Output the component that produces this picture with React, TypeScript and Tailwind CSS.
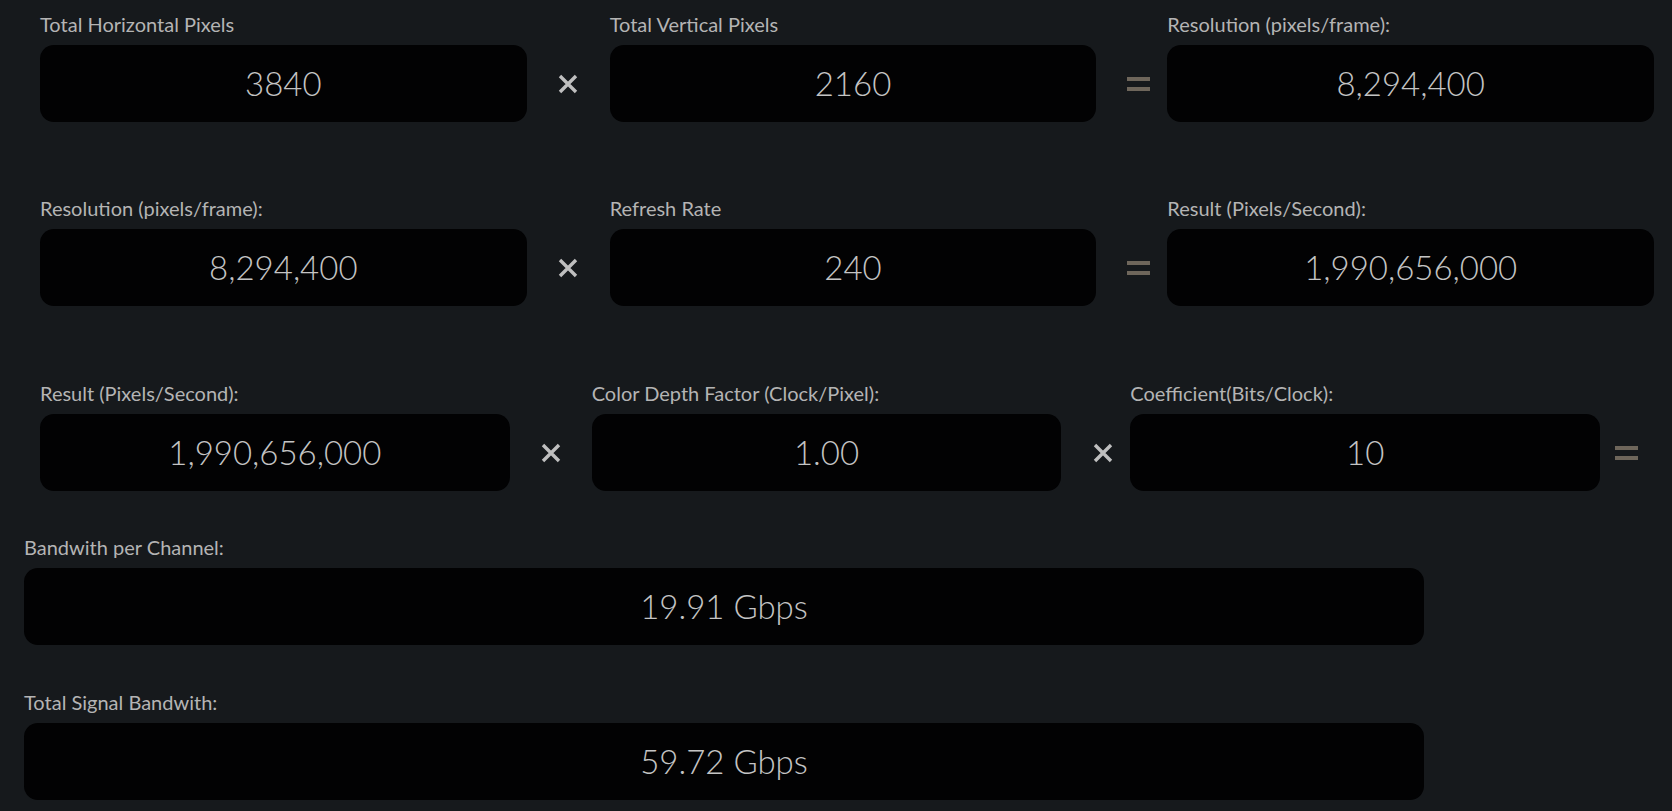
import React from "react";

// Calculator rows: field widths follow the reference screen
type FieldProps = {
  label: string;
  value: string;
  className?: string;
};

function Field({ label, value, className = "" }: FieldProps) {
  return (
    <div className={`flex flex-col ${className}`}>
      <div className="h-[24px] leading-[24px] mb-[9px] text-[20px] text-[#b4b4b4] whitespace-nowrap">
        {label}
      </div>
      <div className="h-[77px] rounded-[14px] bg-[#020203] flex items-center justify-center text-[33px] font-light text-[#c4c4c4]">
        {value}
      </div>
    </div>
  );
}

function Times({ className = "" }: { className?: string }) {
  return (
    <div className={`self-end h-[77px] flex items-center shrink-0 ${className}`}>
      <svg width="20" height="20" viewBox="0 0 20 20">
        <path d="M2 2 L18 18 M18 2 L2 18" stroke="#bfbfbf" strokeWidth="3.4" />
      </svg>
    </div>
  );
}

function Equals({ className = "" }: { className?: string }) {
  return (
    <div className={`self-end h-[77px] flex items-center shrink-0 ${className}`}>
      <div className="flex flex-col gap-[6px] mt-[1px]">
        <div className="h-[4px] w-[23px] bg-[#6e665b]" />
        <div className="h-[4px] w-[23px] bg-[#6e665b]" />
      </div>
    </div>
  );
}

export default function App() {
  return (
    <div
      className="min-h-[811px] w-full bg-[#16191c] pt-[12px]"
      style={{ fontFamily: 'Lato, "Noto Sans", sans-serif' }}
    >
      <div className="pl-[40px] pr-[18px]">
        {/* Row 1 */}
        <div className="flex mb-[74px]">
          <Field className="flex-1" label="Total Horizontal Pixels" value="3840" />
          <Times className="w-[83px] pl-[31px]" />
          <Field className="flex-1" label="Total Vertical Pixels" value="2160" />
          <Equals className="w-[71px] pl-[31px]" />
          <Field className="flex-1" label="Resolution (pixels/frame):" value="8,294,400" />
        </div>

        {/* Row 2 */}
        <div className="flex mb-[75px]">
          <Field className="flex-1" label="Resolution (pixels/frame):" value="8,294,400" />
          <Times className="w-[83px] pl-[31px]" />
          <Field className="flex-1" label="Refresh Rate" value="240" />
          <Equals className="w-[71px] pl-[31px]" />
          <Field className="flex-1" label="Result (Pixels/Second):" value="1,990,656,000" />
        </div>

        {/* Row 3 */}
        <div className="flex mb-[44px]">
          <Field className="flex-1" label="Result (Pixels/Second):" value="1,990,656,000" />
          <Times className="w-[82px] pl-[31px]" />
          <Field className="flex-1" label="Color Depth Factor (Clock/Pixel):" value="1.00" />
          <Times className="w-[69px] pl-[32px]" />
          <Field className="flex-1" label="Coefficient(Bits/Clock):" value="10" />
          <Equals className="w-[54px] pl-[15px]" />
        </div>
      </div>

      <div className="px-[24px]">
        <Field className="w-[1400px] mb-[45px]" label="Bandwith per Channel:" value="19.91 Gbps" />
        <Field className="w-[1400px]" label="Total Signal Bandwith:" value="59.72 Gbps" />
      </div>
    </div>
  );
}
